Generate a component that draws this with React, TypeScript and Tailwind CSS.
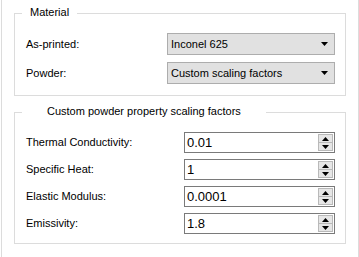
const Caret = ({ up }: { up?: boolean }) => (
  <svg width="7" height="4" viewBox="0 0 7 4">
    <path d={up ? "M3.5 0L7 4H0z" : "M0 0h7L3.5 4z"} fill="#000" />
  </svg>
);

const Combo = ({ value }: { value: string }) => (
  <div className="flex h-[22px] w-[168px] items-center justify-between border border-[#adadad] bg-[#e1e1e1] pl-[3px] pr-[6px]">
    <span>{value}</span>
    <Caret />
  </div>
);

const Spin = ({ value }: { value: string }) => (
  <div className="flex h-[21px] w-[151px] items-center border border-[#7a7a7a] bg-white">
    <span className="flex-1 pl-[2px] text-[13px] leading-none text-black">{value}</span>
    <div className="mr-[1px] flex h-[17px] w-[15px] flex-col border border-[#b9b9b9] bg-[#e6e6e6]">
      <div className="flex flex-1 items-center justify-center border-b border-[#b9b9b9]">
        <Caret up />
      </div>
      <div className="flex flex-1 items-center justify-center">
        <Caret />
      </div>
    </div>
  </div>
);

const Group = ({ title, titlePad, children, className }: { title: string; titlePad: string; children: React.ReactNode; className: string }) => (
  <div className={`relative border border-[#dcdcdc] ${className}`}>
    <span className={`absolute left-[7px] -top-[8px] bg-white leading-[13px] ${titlePad}`}>{title}</span>
    {children}
  </div>
);

export default function App() {
  const props = [
    ["Thermal Conductivity:", "0.01"],
    ["Specific Heat:", "1"],
    ["Elastic Modulus:", "0.0001"],
    ["Emissivity:", "1.8"],
  ];
  return (
    <div className="ml-[1px] h-[257px] w-[358px] border-x border-[#dcdcdc] bg-white px-[12px] pt-[13px] font-['Liberation_Sans',Arial,sans-serif] text-[11px] text-black">
      <Group title="Material" titlePad="px-[8px]" className="flex flex-col gap-[7px] pb-[11px] pl-[11px] pr-[10px] pt-[19px]">
        <div className="flex items-center justify-between">
          <span>As-printed:</span>
          <Combo value="Inconel 625" />
        </div>
        <div className="flex items-center justify-between">
          <span>Powder:</span>
          <Combo value="Custom scaling factors" />
        </div>
      </Group>

      <Group title="Custom powder property scaling factors" titlePad="px-[25px]" className="mt-[16px] flex flex-col gap-[6px] pb-[9px] pl-[11px] pr-[10px] pt-[19px]">
        {props.map(([label, value]) => (
          <div key={label} className="flex items-center justify-between">
            <span>{label}</span>
            <Spin value={value} />
          </div>
        ))}
      </Group>
    </div>
  );
}
